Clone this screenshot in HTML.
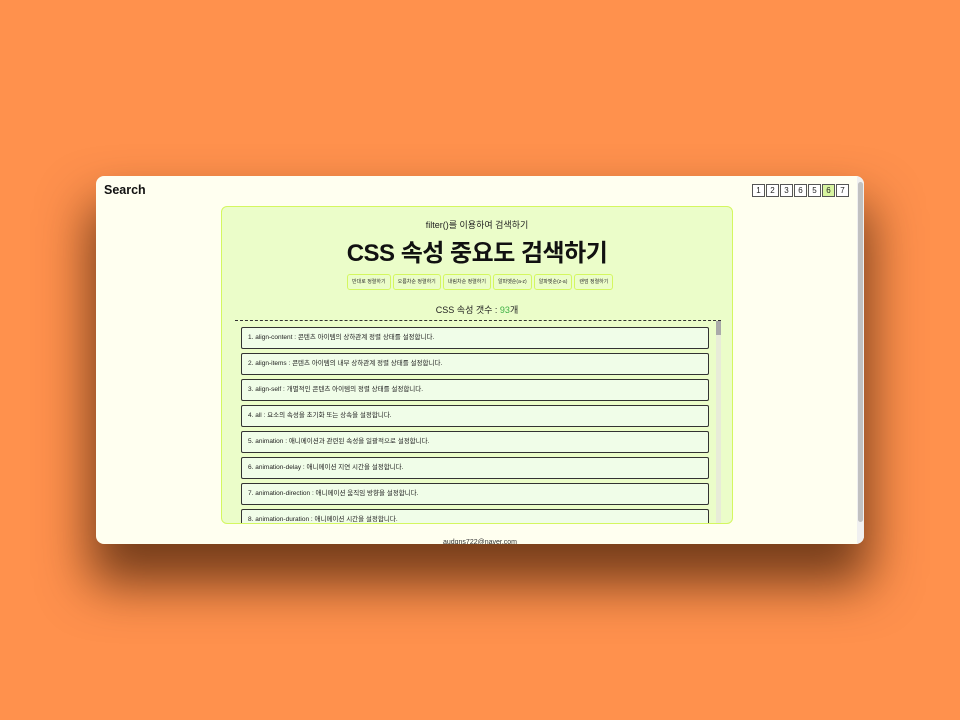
<!DOCTYPE html>
<html><head><meta charset="utf-8"><style>
*{margin:0;padding:0;box-sizing:border-box}
body{width:960px;height:720px;background:#ff914d;overflow:hidden;font-family:"Liberation Sans","Noto Sans CJK KR",sans-serif;position:relative}
.win{position:absolute;left:96px;top:176px;width:768px;height:368px;background:#fffff0;border-radius:8px;overflow:hidden;box-shadow:0 34px 50px 6px rgba(60,25,5,0.7)}
.sb{position:absolute;right:0;top:0;width:7px;height:368px;background:#f0f0f0}
.sb div{position:absolute;left:1px;top:6px;width:5px;height:340px;background:#c1c1c1;border-radius:3px}
h3{position:absolute;left:8px;top:7px;font-size:12.5px;font-weight:bold;color:#111}
.pg{position:absolute;left:656px;top:8px;display:flex;gap:1px}
.pg span{width:13px;height:13px;border:1px solid #555;background:#fff;font-size:8px;text-align:center;line-height:11px;color:#222}
.pg span.on{background:#d8f5a0}
.box{position:absolute;left:125px;top:30px;width:512px;height:318px;background:#ebfdc9;border:1px solid #d4f760;border-radius:6px}
.sub{position:absolute;top:11px;width:100%;text-align:center;font-size:9px;color:#222}
.t{position:absolute;top:26px;width:100%;text-align:center;font-size:24px;font-weight:bold;color:#111;letter-spacing:-0.5px}
.btns{position:absolute;top:67px;left:125px;display:flex;gap:2px}
.btns span{height:16px;border:1px solid #d4f760;border-radius:3px;font-size:5px;line-height:14px;padding:0 4px;color:#333;background:#ebfdc9}
.cnt{position:absolute;top:96px;width:100%;text-align:center;font-size:9px;color:#222}
.cnt b{color:#3cb043;font-weight:normal}
.list{position:absolute;left:13px;top:113px;width:486px;height:203px;border-top:1px dashed #333;overflow:hidden}
.lsb{position:absolute;right:0;top:0;width:5px;height:203px;background:#e8ecd8}
.lsb div{width:5px;height:14px;background:#aaa}
.it{position:absolute;left:6px;width:468px;height:22px;border:1px solid #333;border-radius:2px;background:#f0fde8;font-size:6.5px;line-height:20px;padding-left:6px;color:#222}
.ft{position:absolute;left:0;width:100%;top:363px;text-align:center;font-size:7px;color:#333}
</style></head><body>
<div class="win">
<h3>Search</h3>
<div class="pg"><span>1</span><span>2</span><span>3</span><span>6</span><span>5</span><span class="on">6</span><span>7</span></div>
<div class="box">
<div class="sub">filter()를 이용하여 검색하기</div>
<div class="t">CSS 속성 중요도 검색하기</div>
<div class="btns"><span>반대로 정렬하기</span><span>오름차순 정렬하기</span><span>내림차순 정렬하기</span><span>알파벳순(a-z)</span><span>알파벳순(z-a)</span><span>랜덤 정렬하기</span></div>
<div class="cnt">CSS 속성 갯수 : <b>93</b>개</div>
<div class="list">
<div class="lsb"><div></div></div>
<div class="it" style="top:6px">1. align-content : 콘텐츠 아이템의 상하관계 정렬 상태를 설정합니다.</div>
<div class="it" style="top:32px">2. align-items : 콘텐츠 아이템의 내부 상하관계 정렬 상태를 설정합니다.</div>
<div class="it" style="top:58px">3. align-self : 개별적인 콘텐츠 아이템의 정렬 상태를 설정합니다.</div>
<div class="it" style="top:84px">4. all : 요소의 속성을 초기화 또는 상속을 설정합니다.</div>
<div class="it" style="top:110px">5. animation : 애니메이션과 관련된 속성을 일괄적으로 설정합니다.</div>
<div class="it" style="top:136px">6. animation-delay : 애니메이션 지연 시간을 설정합니다.</div>
<div class="it" style="top:162px">7. animation-direction : 애니메이션 움직임 방향을 설정합니다.</div>
<div class="it" style="top:188px">8. animation-duration : 애니메이션 시간을 설정합니다.</div>
</div>
</div>
<div class="ft">audgns722@naver.com</div>
<div class="sb"><div></div></div>
</div>
</body></html>
